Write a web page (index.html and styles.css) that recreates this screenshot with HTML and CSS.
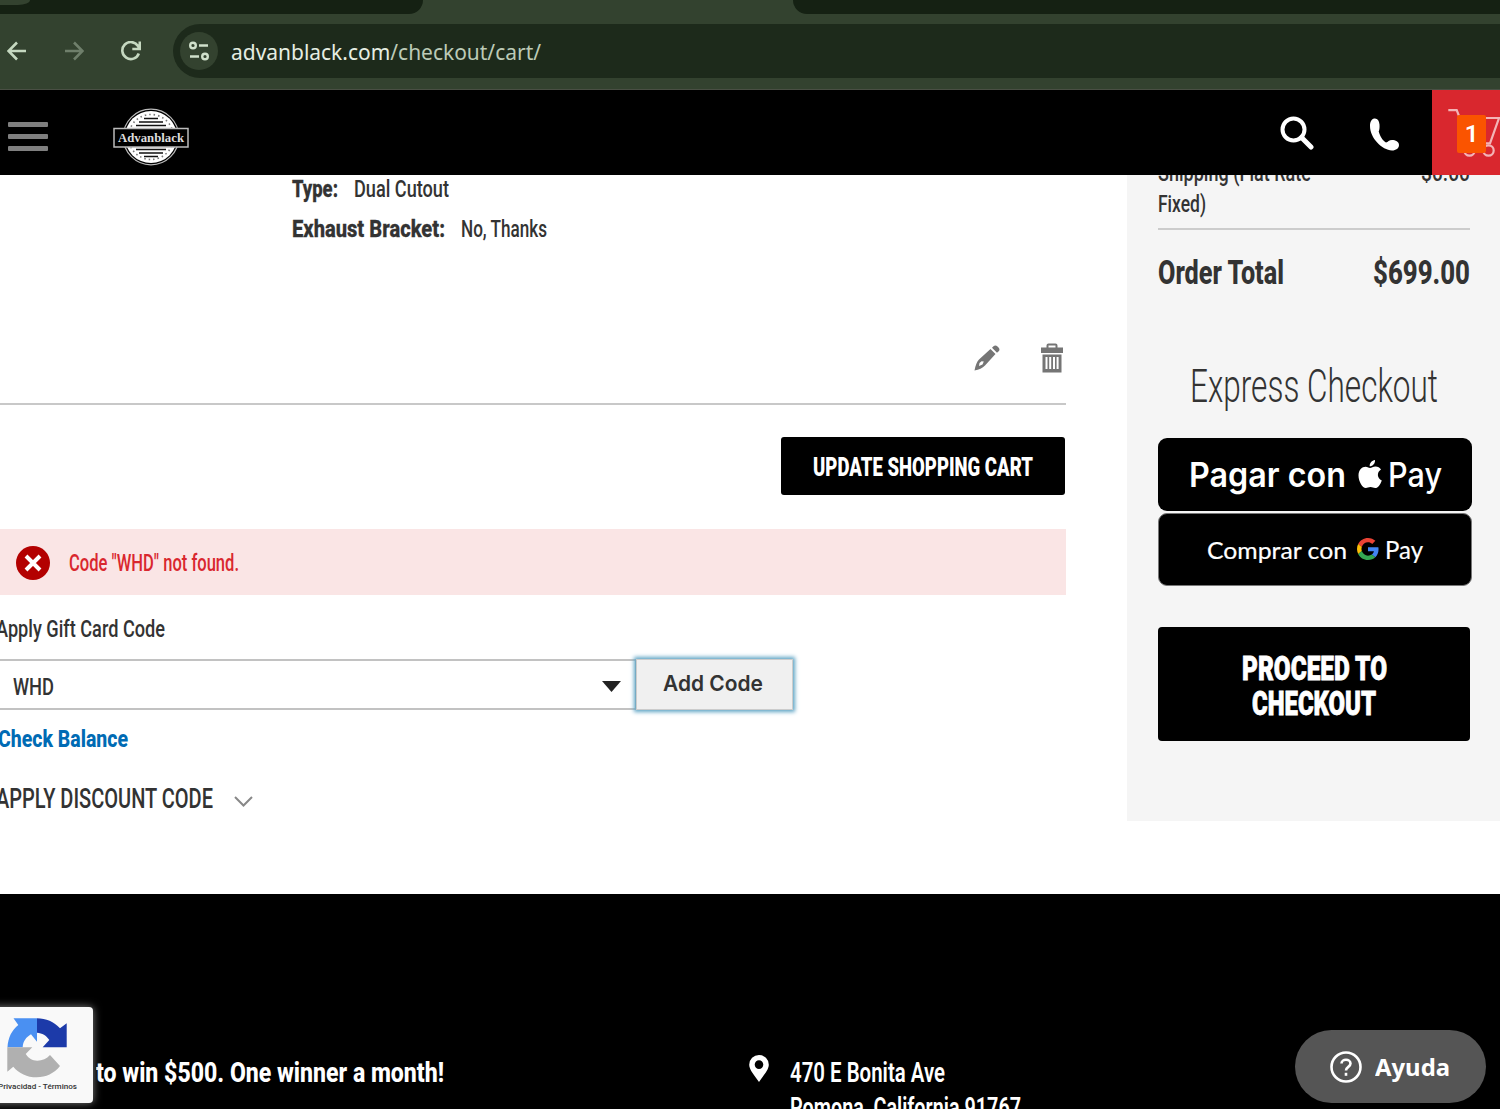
FILE: index.html
```html
<!DOCTYPE html>
<html lang="en">
<head>
    <meta charset="UTF-8">
    <meta name="viewport" content="width=device-width, initial-scale=1.0">
    <title>Shopping Cart</title>
    <link rel="stylesheet" href="styles.css">
</head>
<body>
    <div class="browser">
        <div class="tabs">
            <div class="tab tab-left"><span class="tab-button"></span></div>
            <div class="tab tab-right"></div>
        </div>
        <div class="toolbar">
            <svg class="nav-icon" width="20" height="20" viewBox="0 0 20 20"><path d="M19 10H2M10 1.5 1.500 10 10 18.500"/></svg>
            <svg class="nav-icon forward" width="20" height="20" viewBox="0 0 20 20"><path d="M1 10h17M10 1.500 18.500 10 10 18.500"/></svg>
            <svg class="nav-icon" width="20" height="20" viewBox="0 0 20 20"><path d="M17.800 12.500A8.500 8.500 0 1 1 17 5L18.500 7.500M18.800 .5v7.500h-7.500"/></svg>
            <div class="omnibox">
                <span class="site-info">
                    <svg width="22" height="20" viewBox="0 0 22 20"><circle cx="5" cy="4.500" r="2.800"/><path d="M11 4.500h9M2 15.500h9"/><circle cx="17" cy="15.500" r="2.800"/></svg>
                </span>
                <span class="url fit" data-width="310">advanblack.com<span class="path">/checkout/cart/</span></span>
            </div>
        </div>
    </div>

    <header class="header">
        <div class="burger"><span></span><span></span><span></span></div>
        <svg class="logo" width="76" height="60" viewBox="0 0 76 60">
            <circle cx="38" cy="30" r="27.800" fill="#000" stroke="#bbb" stroke-width="1.200"/>
            <circle cx="38" cy="30" r="26" fill="#fff"/>
            <circle cx="38" cy="30" r="22.500" fill="none" stroke="#777" stroke-width="1.600" stroke-dasharray="1.500 3"/>
            <path d="M31 11.500h14M26 15h24M23 18.500h30M23 42.500h30M26 46h24M31 49.500h14" stroke="#111" stroke-width="1.700"/>
            <rect x="1" y="21.500" width="74" height="18.500" fill="#000" stroke="#bbb" stroke-width="1.500"/>
            <text x="38" y="35" text-anchor="middle" textLength="66" lengthAdjust="spacingAndGlyphs">Advanblack</text>
        </svg>
        <div class="header-tools">
            <svg class="search" width="34" height="34" viewBox="0 0 34 34"><circle cx="13.500" cy="13.500" r="11" stroke-width="4"/><path d="M21.500 21.500l9.500 9.500" stroke-width="5"/></svg>
            <svg class="phone" width="30" height="33" viewBox="0 0 30 33"><path d="M5 .5C2 .5 0 3 0 8c0 12 12 24 22 24.500 4 0 7-2.300 7-5.500s-3.500-5-7-5c-3 0-4 2-6 2.500C13 23 10 18.500 8.700 13.500c.8-1.500 1-4 .8-7C9.200 2.500 7.500.5 5 .5z"/></svg>
            <div class="minicart">
                <svg width="52" height="50" viewBox="0 0 52 50"><path d="M.3 1.200h8.400L11 7l9 27.300h22L51 9H16"/><circle cx="21.500" cy="41.500" r="5.200"/><circle cx="40.500" cy="41.500" r="5.200"/></svg>
                <span class="count">1</span>
            </div>
        </div>
    </header>

    <main class="main">
        <section class="cart">
            <dl class="options">
                <div><dt><span class="fit" data-width="46">Type:</span></dt><dd><span class="fit" data-width="95">Dual Cutout</span></dd></div>
                <div><dt><span class="fit" data-width="153">Exhaust Bracket:</span></dt><dd><span class="fit" data-width="86">No, Thanks</span></dd></div>
            </dl>
            <div class="item-actions">
                <svg width="26" height="26" viewBox="0 0 26 26"><path fill-rule="evenodd" d="M.5 25.500C1.500 20 3 16.500 5 14.500L16.500 4l5 5L11 20.500C8.500 23 5 24.800.5 25.500zM5 21l3.500-1.500 1.300-3-2.200-.3L5.500 18zM18 2.700l1.500-1.500c1.200-1.200 2.800-1 4 .2l1 1c1.200 1.200 1.300 2.700.2 3.800L23 7.700z"/></svg>
                <svg width="22" height="30" viewBox="0 0 22 30"><path fill-rule="evenodd" d="M0 4.500h5.500V2.500Q5.500.5 7.500.5h7q2 0 2 2v2H22V10H0zM7.500 4.500h7V2.500h-7zM1.500 11.500h19v18h-19zM4.500 14v12h2v-12zM8.200 14v12h2v-12zM12 14v12h2v-12zM15.600 14v12h2v-12z"/></svg>
            </div>
            <button class="update"><span class="fit" data-width="220">UPDATE SHOPPING CART</span></button>
            <div class="message">
                <svg width="34" height="34" viewBox="0 0 34 34"><circle cx="17" cy="17" r="17" fill="#b30000"/><path d="M10 10l14 14M24 10 10 24" stroke="#fff" stroke-width="4"/></svg>
                <span class="fit" data-width="170">Code "WHD" not found.</span>
            </div>
            <div class="gift-label"><span class="fit" data-width="169">Apply Gift Card Code</span></div>
            <div class="gift-form">
                <div class="gift-input"><span class="fit" data-width="41">WHD</span><svg width="19" height="11" viewBox="0 0 19 11"><path d="M0 0h19L9.500 11z"/></svg></div>
                <button class="add-code"><span class="fit" data-width="100">Add Code</span></button>
            </div>
            <a class="balance"><span class="fit" data-width="130">Check Balance</span></a>
            <div class="discount">
                <span class="fit" data-width="217">APPLY DISCOUNT CODE</span>
                <svg width="19" height="11" viewBox="0 0 19 11"><path d="M1 1l8.500 8.500L18 1"/></svg>
            </div>
        </section>

        <aside class="summary">
            <div class="shipping">
                <div><span class="fit" data-width="153">Shipping (Flat Rate</span><br><span class="fit" data-width="48">Fixed)</span></div>
                <span class="fit" data-width="49">$0.00</span>
            </div>
            <div class="total">
                <span class="fit" data-width="126">Order Total</span>
                <span class="fit" data-width="97">$699.00</span>
            </div>
            <h2 class="express"><span class="fit" data-width="248">Express Checkout</span></h2>
            <button class="apple-pay">
                <span class="fit" data-width="157">Pagar con</span>
                <svg width="24" height="29" viewBox="0 0 24 29"><path d="M12 8c1.500 0 3-1.400 5.500-1.400 2.300 0 4.300 1.100 5.500 2.900-4.600 2.700-3.900 9 .8 10.900-1.200 3.600-3.800 7.600-6.600 7.600-1.800 0-2.600-1-4.700-1s-3 1-4.700 1C4.500 28 .5 21.500.5 15.500.5 10 4 6.700 7.600 6.700 9.600 6.700 11 8 12 8zM11.700 6.300C11.500 3 14 .5 17 0c.4 3.200-2.200 6.300-5.300 6.300z"/></svg>
                <span class="pay fit" data-width="54">Pay</span>
            </button>
            <button class="google-pay">
                <span class="fit" data-width="140">Comprar con</span>
                <svg width="22" height="22" viewBox="0 0 48 48"><path fill="#ea4335" d="M24 9.500c3.540 0 6.710 1.220 9.210 3.600l6.850-6.850C35.900 2.380 30.470 0 24 0 14.620 0 6.510 5.380 2.560 13.220l7.980 6.190C12.430 13.720 17.740 9.500 24 9.500z"/><path fill="#4285f4" d="M46.980 24.550c0-1.570-.15-3.090-.38-4.550H24v9.020h12.940c-.58 2.960-2.260 5.480-4.780 7.180l7.730 6c4.510-4.180 7.090-10.360 7.090-17.650z"/><path fill="#fbbc05" d="M10.530 28.590c-.48-1.450-.76-2.990-.76-4.590s.27-3.140.76-4.590l-7.980-6.190C.92 16.460 0 20.120 0 24s.92 7.540 2.560 10.780l7.970-6.190z"/><path fill="#34a853" d="M24 48c6.480 0 11.930-2.130 15.890-5.810l-7.730-6c-2.150 1.450-4.920 2.300-8.160 2.300-6.260 0-11.570-4.220-13.470-9.910l-7.980 6.190C6.510 42.620 14.620 48 24 48z"/></svg>
                <span class="pay fit" data-width="38">Pay</span>
            </button>
            <button class="proceed">
                <span class="fit" data-width="145">PROCEED TO</span>
                <span class="fit" data-width="124">CHECKOUT</span>
            </button>
        </aside>
    </main>

    <footer class="footer">
        <div class="promo"><span class="fit" data-width="348">to win $500. One winner a month!</span></div>
        <div class="address">
            <svg width="20" height="27" viewBox="0 0 20 27"><path fill-rule="evenodd" d="M10 0a9.800 9.800 0 0 1 9.800 9.800C19.800 15 14 21 10 27 6 21 .2 15 .2 9.800A9.800 9.800 0 0 1 10 0zM10 5.300a4.300 4.300 0 1 0 0 8.600 4.300 4.300 0 0 0 0-8.600z"/></svg>
            <div>
                <span class="fit" data-width="155">470 E Bonita Ave</span><br>
                <span class="fit" data-width="231">Pomona, California 91767</span>
            </div>
        </div>
    </footer>

    <div class="recaptcha">
        <svg width="60" height="60" viewBox="0 0 60 60">
            <path fill="#4a90f2" d="M6.500.3H30v23.400l-6-7.400c-5 3-8 7-8.300 13H.5C1 19.500 5 12 11.300 7z"/>
            <path fill="#1c3aa9" d="M30 .3c9 0 17 3.500 23 10l6.700-5v24H35.700l6.600-7.300c-3-4.500-7-7-12.300-7.300z"/>
            <path fill="#b0b0b0" d="M.3 29.300h25L18.700 36c3 4.500 6.500 6.700 11.600 6.700 5 0 9.500-2 12.700-5.700L53 48c-6 7.500-14 11.300-23.300 11.300C20 59.300 12 55.500 6.300 48.700l-6 5z"/>
        </svg>
        <span class="fit" data-width="79">Privacidad - Términos</span>
    </div>

    <div class="help">
        <svg width="32" height="32" viewBox="0 0 32 32"><circle cx="16" cy="16" r="14.500"/><path d="M11.500 12.500c0-5 9-5 9 0 0 3.500-4.500 3.200-4.500 7"/><path d="M16 21.800v3"/></svg>
        <span class="fit" data-width="75">Ayuda</span>
    </div>

    <script>
        document.querySelectorAll('.fit').forEach(el => {
            const natural = el.getBoundingClientRect().width;
            const width = Number(el.dataset.width);
            el.style.transform = 'scaleX(' + width / natural + ')';
            el.style.marginRight = (width - natural) + 'px';
        });
    </script>
</body>
</html>
```
FILE: styles.css
```css
* {
    box-sizing: border-box;
}
body {
    margin: 0;
    height: 1109px;
    overflow: hidden;
    position: relative;
    background: #fff;
    color: #333;
    font-family: Roboto, "Liberation Sans", sans-serif;
    font-size: 24.5px;
    font-weight: 500;
}
svg {
    display: block;
    flex: none;
}
button {
    display: flex;
    align-items: center;
    justify-content: center;
    padding: 0;
    margin: 0;
    border: none;
    background: #000;
    color: #fff;
    font-family: inherit;
}
.fit {
    display: inline-block;
    flex: none;
    white-space: nowrap;
    transform-origin: 0 50%;
}

/* browser bar */
.browser {
    height: 90px;
    background: #33422f;
    border-bottom: 1px solid #4a4f44;
}
.tabs {
    display: flex;
    justify-content: space-between;
    height: 14px;
}
.tab {
    background: #152113;
}
.tab-left {
    width: 423px;
    border-bottom-right-radius: 14px;
}
.tab-right {
    width: 707px;
    border-bottom-left-radius: 14px;
}
.tab-button {
    display: block;
    width: 30px;
    height: 5px;
    background: #33422f;
    border-bottom-right-radius: 12px 5px;
}
.toolbar {
    display: flex;
    align-items: center;
    height: 74px;
    padding-left: 7px;
}
.nav-icon {
    margin-right: 37px;
    fill: none;
    stroke: #c5d8c0;
    stroke-width: 2.6;
}
.nav-icon.forward {
    stroke: #6f7f6b;
}
.omnibox {
    flex: 1;
    display: flex;
    align-items: center;
    height: 54px;
    margin-left: -5px;
    padding-left: 7px;
    background: #1d2a1b;
    border-radius: 27px 0 0 27px;
}
.site-info {
    display: flex;
    align-items: center;
    justify-content: center;
    width: 38px;
    height: 38px;
    margin-right: 13px;
    border-radius: 50%;
    background: #33422f;
}
.site-info svg {
    fill: none;
    stroke: #d0e0cb;
    stroke-width: 2.4;
}
.url {
    font-family: "Noto Sans", sans-serif;
    font-size: 22px;
    font-weight: 400;
    color: #e6eee2;
}
.url .path {
    color: #bccab7;
}

/* site header */
.header {
    display: flex;
    align-items: center;
    height: 85px;
    padding-left: 8px;
    background: #000;
}
.burger {
    display: flex;
    flex-direction: column;
    gap: 7px;
    width: 40px;
    margin: 8px 65px 0 0;
}
.burger span {
    height: 4.700px;
    border-radius: 1px;
    background: #7f7f7f;
}
.logo {
    margin-top: 9px;
}
.logo text {
    fill: #ddd;
    font: bold 12px "Liberation Serif", serif;
}
.header-tools {
    display: flex;
    align-items: center;
    height: 100%;
    margin-left: auto;
}
.search {
    margin-right: 56px;
    fill: none;
    stroke: #fff;
    stroke-linecap: round;
}
.phone {
    margin: 3px 32px 0 0;
    fill: #fff;
}
.minicart {
    position: relative;
    width: 68px;
    height: 85px;
    padding: 19px 0 0 16px;
    background: #d9272e;
    overflow: hidden;
}
.minicart svg {
    fill: none;
    stroke: #f3b4b6;
    stroke-width: 2.2;
}
.count {
    position: absolute;
    left: 25px;
    top: 25px;
    width: 29px;
    height: 38px;
    border-radius: 2px;
    background: #fa5400;
    color: #fff;
    font-size: 24px;
    font-weight: 600;
    line-height: 39px;
    text-align: center;
}

/* cart */
.main {
    display: flex;
    justify-content: space-between;
    height: 719px;
    overflow: hidden;
}
.cart {
    width: 1066px;
}
.options {
    margin: -7px 0 0 292px;
}
.options div {
    display: flex;
    align-items: center;
    height: 40px;
}
.options dt {
    font-weight: 800;
    -webkit-text-stroke: 0.3px;
}
.options dd {
    margin-left: 16px;
}
.item-actions {
    display: flex;
    justify-content: flex-end;
    align-items: center;
    gap: 41px;
    height: 157px;
    padding: 64px 3px 0 0;
    border-bottom: 2px solid #c8c8c8;
    fill: #757575;
}
.update {
    width: 284px;
    height: 58px;
    margin: 32px 1px 0 auto;
    padding-top: 2px;
    border-radius: 3px;
    font-size: 26px;
    font-weight: 900;
}
.message {
    display: flex;
    align-items: center;
    gap: 19px;
    height: 66px;
    margin-top: 34px;
    padding: 1px 0 0 16px;
    background: #fae5e5;
    color: #d9272e;
}
.gift-label {
    display: flex;
    align-items: center;
    height: 64px;
    margin-left: -4px;
    padding-top: 2px;
}
.gift-form {
    display: flex;
    height: 51px;
}
.gift-input {
    display: flex;
    align-items: center;
    justify-content: space-between;
    width: 636px;
    padding: 3px 14px 0 13px;
    border: solid #c2c2c2;
    border-width: 2px 1px 2px 0;
}
.gift-input svg {
    fill: #222;
}
.add-code {
    width: 157px;
    height: 51px;
    padding: 0 3px 3px 0;
    border: 1px solid #ccc;
    background: #f0f0f0;
    box-shadow: 0 0 4px 2px #5ea4c5;
    color: #333;
    font-family: Inter, sans-serif;
    font-size: 22px;
    font-weight: 600;
}
.balance {
    display: flex;
    align-items: center;
    height: 60px;
    margin-left: -2px;
    padding-bottom: 3px;
    color: #006bb4;
    font-weight: 800;
}
.discount {
    display: flex;
    align-items: center;
    gap: 21px;
    height: 58px;
    margin-left: -4px;
    padding-bottom: 2px;
    font-size: 28px;
}
.discount svg {
    margin-top: 7px;
    fill: none;
    stroke: #888;
    stroke-width: 2;
}

/* order summary */
.summary {
    width: 373px;
    height: 646px;
    padding: 0 30px 0 31px;
    background: #f5f5f5;
    overflow: hidden;
}
.shipping {
    display: flex;
    justify-content: space-between;
    height: 73px;
    margin-top: -18px;
    border-bottom: 2px solid #ccc;
    line-height: 31px;
}
.total {
    display: flex;
    align-items: center;
    justify-content: space-between;
    height: 85px;
    font-size: 32.500px;
    font-weight: 800;
}
.express {
    display: flex;
    align-items: center;
    justify-content: center;
    height: 123px;
    margin: 0;
    padding-top: 19px;
    font-size: 46px;
    font-weight: 350;
}
.apple-pay {
    width: 314px;
    height: 73px;
    padding-top: 1px;
    border-radius: 9px;
    font-family: Inter, sans-serif;
    font-size: 33.500px;
    font-weight: 600;
}
.apple-pay svg {
    margin: -2px 6px 0 12px;
    fill: #fff;
}
.apple-pay .pay {
    font-weight: 450;
}
.google-pay {
    width: 314px;
    height: 73px;
    margin-top: 2px;
    border: 1px solid #777;
    border-radius: 9px;
    font-family: Lato, sans-serif;
    font-size: 23px;
    -webkit-text-stroke: 0.2px;
}
.google-pay svg {
    margin: -2px 6px 0 10px;
}
.google-pay .pay {
    font-size: 25px;
    margin-top: -1px;
}
.proceed {
    flex-direction: column;
    width: 312px;
    height: 114px;
    margin-top: 41px;
    padding-top: 3px;
    border-radius: 4px;
    font-size: 33px;
    font-weight: 900;
    line-height: 35px;
    -webkit-text-stroke: 0.8px;
}

/* footer */
.footer {
    display: flex;
    height: 215px;
    padding: 161px 0 0 96px;
    background: #000;
    color: #fff;
    font-size: 27.500px;
    font-weight: 800;
    line-height: 35px;
    overflow: hidden;
}
.promo {
    width: 653px;
}
.address {
    display: flex;
    gap: 21px;
    font-weight: 600;
}
.address svg {
    fill: #fff;
}

/* floating widgets */
.recaptcha {
    position: absolute;
    left: -10px;
    top: 1007px;
    width: 103px;
    height: 96px;
    padding: 11px 0 0 8px;
    border-radius: 4px;
    background: #f9f9f9;
    box-shadow: 0 0 8px #808080;
    color: #333;
    font-size: 8px;
    line-height: 18px;
}
.recaptcha svg {
    margin-left: 9px;
}
.help {
    position: absolute;
    left: 1295px;
    top: 1030px;
    display: flex;
    align-items: center;
    gap: 13px;
    width: 191px;
    height: 73px;
    padding-left: 35px;
    border-radius: 37px;
    background: #555;
    color: #fff;
    font-family: "Noto Sans", sans-serif;
    font-size: 24px;
    font-weight: 700;
}
.help svg {
    fill: none;
    stroke: #fff;
    stroke-width: 2.6;
}
```
